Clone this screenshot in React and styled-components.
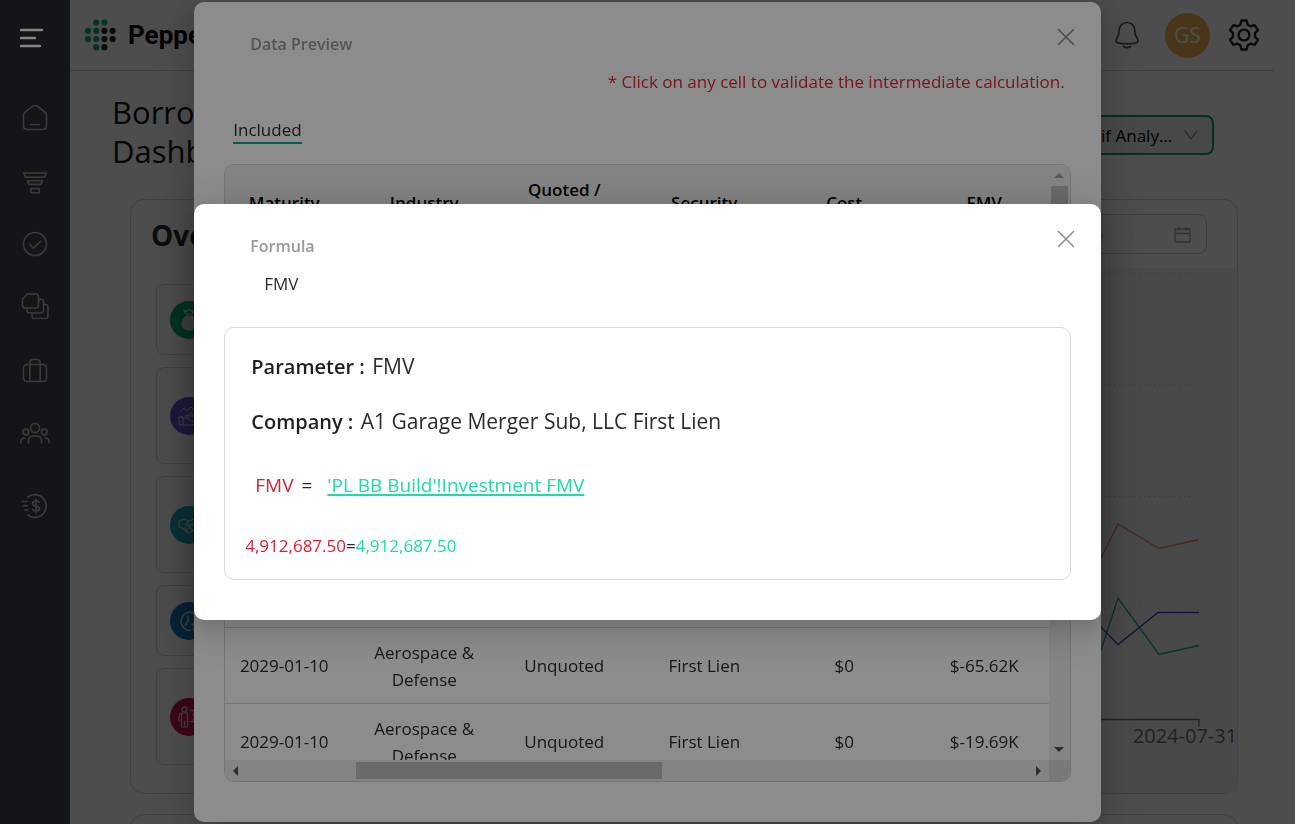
import React, { useLayoutEffect, useRef } from "react";
import styled, { createGlobalStyle } from "styled-components";

const GlobalStyle = createGlobalStyle`
  *, *::before, *::after { box-sizing: border-box; }
  html, body { height: 100%; }
  body {
    margin: 0;
    overflow: hidden;
    background: #fff;
    color: #2b2b2b;
    font-family: "Open Sans", "Noto Sans", sans-serif;
    font-size: 17px;
    font-weight: 400;
    line-height: 27px;
  }
  button, input, select { font: inherit; color: inherit; }
  button { padding: 0; border: 0; background: none; cursor: pointer; }
  h1, h2, h3, p { margin: 0; }
  svg { display: block; }
`;

/* ---------- page shell ---------- */

const Shell = styled.div`
  display: flex;
  height: 100vh;
`;

const Sidebar = styled.nav`
  position: relative;
  z-index: 15;
  flex: none;
  width: 70px;
  height: 100vh;
  padding-top: 26px;
  background: #20282d;
  display: flex;
  flex-direction: column;
  align-items: center;
`;

const MenuButton = styled.button`
  width: 32px;
  height: 24px;
  margin-bottom: 52px;
  margin-right: 6px;
  color: #f4f4f4;
`;

const NavItem = styled.a`
  display: grid;
  place-items: center;
  width: 34px;
  height: 32px;
  margin-bottom: ${(p) => p.$gap || 31}px;
  color: #6c6c6c;
`;

const Page = styled.div`
  flex: 1;
  min-width: 0;
  height: 100vh;
  overflow: hidden;
`;

const Header = styled.header`
  display: flex;
  align-items: center;
  height: 71px;
  margin-right: 21px;
  padding: 0 14px;
  border-bottom: 1px solid #d0d0d0;
`;

const Brand = styled.a`
  display: flex;
  align-items: center;
  gap: 12px;
  margin-right: auto;
  color: #000;
  font: 700 26px/32px Roboto, sans-serif;
  text-decoration: none;
`;

const HeaderActions = styled.div`
  display: flex;
  align-items: center;
  gap: 18px;
`;

const IconButton = styled.button`
  color: ${(p) => p.$tone || "#50565e"};
`;

const BellButton = styled(IconButton)`
  margin-right: 7px;
`;

const Avatar = styled.span`
  display: grid;
  place-items: center;
  width: 45px;
  height: 45px;
  border-radius: 50%;
  background: #f4b350;
  color: #fff;
  font-size: 21px;
`;

const Content = styled.main`
  padding: 22px 57px 0 60px;
`;

const TitleRow = styled.div`
  display: flex;
  align-items: flex-start;
  justify-content: space-between;
  margin-left: -18px;
  padding-right: 24px;
  height: 106px;
`;

const PageTitle = styled.h1`
  max-width: 300px;
  font-size: 31px;
  font-weight: 400;
  line-height: 39px;
  color: #141414;
`;

const SelectBox = styled.label`
  display: flex;
  align-items: center;
  width: 180px;
  height: 40px;
  margin-top: 22px;
  padding: 0 14px 0 19px;
  border: 2px solid #0f9a83;
  border-radius: 8px;
  background: #f0f0f0;
  color: #999;
`;

const SelectField = styled.select`
  flex: 1;
  min-width: 0;
  appearance: none;
  border: 0;
  outline: 0;
  background: none;
  color: #000;
`;

const Panel = styled.section`
  display: flex;
  justify-content: space-between;
  min-height: 595px;
  margin-bottom: 20px;
  border: 1px solid #d5d5d5;
  border-radius: 14px;
`;

const Metrics = styled.div`
  width: 480px;
  padding: 16px 25px 0;
`;

const PanelTitle = styled.h2`
  height: 68px;
  margin-left: -5px;
  font-size: 28px;
  font-weight: 700;
  line-height: 38px;
`;

const MetricCard = styled.article`
  display: flex;
  align-items: center;
  gap: 14px;
  height: ${(p) => (p.$tall ? 97 : 71)}px;
  margin-bottom: 12px;
  padding: 0 13px;
  border: 1px solid #d5d5d5;
  border-radius: 8px;
`;

const MetricBadge = styled.span`
  display: grid;
  place-items: center;
  width: 38px;
  height: 38px;
  border-radius: 50%;
  background: ${(p) => p.$color};
  color: #d8d8d8;
`;

const Trend = styled.div`
  flex: 1;
  min-width: 0;
  display: flex;
  flex-direction: column;
  align-items: flex-end;
`;

const DateBox = styled.label`
  display: flex;
  align-items: center;
  width: 210px;
  height: 40px;
  margin: 14px 30px 14px 0;
  padding: 0 15px 0 34px;
  border: 1px solid #cfcfcf;
  border-radius: 8px;
  color: #a8a8a8;
`;

const DateInput = styled.input`
  flex: 1;
  min-width: 0;
  padding: 0;
  border: 0;
  outline: 0;
  background: none;
  &::placeholder { color: #bfbfbf; opacity: 1; }
`;

const ChartArea = styled.div`
  width: 100%;
  background: #f4f4f4;
`;

/* ---------- modals ---------- */

const Mask = styled.div`
  position: fixed;
  inset: 0;
  z-index: ${(p) => p.$level};
  display: flex;
  align-items: center;
  justify-content: center;
  background: rgba(0, 0, 0, 0.45);
`;

const Dialog = styled.section`
  display: flex;
  flex-direction: column;
  width: 70%;
  padding: 0 30px 40px;
  border-radius: 10px;
  background: #fff;
  box-shadow: 0 6px 16px rgba(0, 0, 0, 0.08), 0 9px 28px 8px rgba(0, 0, 0, 0.05),
    0 6px 48px 8px rgba(0, 0, 0, 0.12);
`;

const DialogHead = styled.header`
  display: flex;
  align-items: flex-start;
  justify-content: space-between;
  height: 66px;
  padding: 23px 0 0 26px;
`;

const DialogTitle = styled.h2`
  font-size: 16px;
  font-weight: 600;
  line-height: 38px;
  color: #999;
`;

const CloseButton = styled.button`
  width: 24px;
  height: 24px;
  margin-right: -7px;
  color: #8c8c8c;
  display: grid;
  place-items: center;
`;

const Note = styled.p`
  padding-right: 6px;
  text-align: right;
  color: #dc2837;
`;

const Tabs = styled.div`
  display: flex;
  padding: 23px 9px 20px;
`;

const Tab = styled.button`
  height: 26px;
  border-bottom: 2px solid #0fa88f;
  line-height: 24px;
`;

const TableFrame = styled.div`
  display: grid;
  grid-template-columns: minmax(0, 1fr) 21px;
  grid-template-rows: auto 21px;
  border: 1px solid #d5d5d5;
  border-radius: 10px;
  overflow: hidden;
`;

const TableViewport = styled.div`
  max-height: calc(100vh - 229px);
  overflow: auto;
  scrollbar-width: none;
`;

const Table = styled.table`
  width: 840px;
  table-layout: fixed;
  border-collapse: separate;
  border-spacing: 0;
  text-align: center;
`;

const HeadCell = styled.th`
  position: sticky;
  top: 0;
  height: 83px;
  padding: 0 16px 7px;
  border-bottom: 1px solid #d5d5d5;
  background: #f0f0f0;
  color: #000;
  font-weight: 600;
`;

const Cell = styled.td`
  height: 76px;
  padding: 0 12px;
  border-bottom: 1px solid #d5d5d5;
`;

const ScrollTrack = styled.div`
  display: flex;
  flex-direction: ${(p) => (p.$vertical ? "column" : "row")};
  align-items: center;
  justify-content: space-between;
  background: #f0f0f0;
`;

const ScrollLane = styled.div`
  flex: 1;
  align-self: stretch;
  display: flex;
  padding: ${(p) => (p.$vertical ? "0 2px" : "2px 0")};
  flex-direction: ${(p) => (p.$vertical ? "column" : "row")};
`;

const ScrollSpace = styled.div`
  flex: ${(p) => p.$share};
`;

const ScrollThumb = styled.div`
  flex: ${(p) => p.$share};
  background: #c1c1c1;
`;

const ScrollArrow = styled.span`
  display: grid;
  place-items: center;
  width: 21px;
  height: 21px;
  color: ${(p) => (p.$dim ? "#a3a3a3" : "#505050")};
`;

const ScrollCorner = styled.div`
  background: #dcdcdc;
`;

const Subject = styled.p`
  height: 57px;
  padding-left: 40px;
`;

const FormulaBox = styled.div`
  height: 253px;
  padding: 24px 20px 0;
  border: 1px solid #d9dadb;
  border-radius: 10px;
`;

const Fact = styled.p`
  margin: 0 6px 27px;
  font-size: 21px;
  line-height: 28px;
`;

const FactName = styled.strong`
  margin-right: 2px;
  font-size: 20px;
  line-height: 20px;
  font-weight: 600;
  color: #1f1f1f;
`;

const Formula = styled.p`
  display: flex;
  margin: 36px 10px 0;
  font-size: 19px;
  line-height: 28px;
`;

const Result = styled.p`
  margin-top: 33px;
`;

const Own = styled.span`
  color: #dc2034;
`;

const Equals = styled.span`
  padding: 0 15px 0 8px;
`;

const Source = styled.a`
  color: #1edbaa;
  text-decoration: underline;
  text-decoration-thickness: 2px;
  text-underline-offset: 2px;
`;

const Value = styled.span`
  color: #1edbaa;
`;

/* ---------- drawings ---------- */

const Stroke = ({ w = 26, h = 26, box = `0 0 ${w} ${h}`, sw = 1.6, children }) => (
  <svg width={w} height={h} viewBox={box} fill="none" stroke="currentColor" strokeWidth={sw}
    strokeLinecap="round" strokeLinejoin="round" aria-hidden="true">
    {children}
  </svg>
);

const CloseIcon = () => (
  <Stroke w={18} h={18} sw={1.5}><path d="M1.5 1.5l15 15M16.5 1.5l-15 15" /></Stroke>
);

const navIcons = [
  {
    name: "Home", gap: 33,
    icon: <Stroke><path d="M1.500 10.500c0-1.600.4-2.400 1.600-3.400l7-5.600c1.800-1.400 4-1.400 5.800 0l7 5.600c1.200 1 1.600 1.800 1.600 3.400v10c0 2.600-1.200 4-4 4h-15c-2.800 0-4-1.400-4-4zM8.500 19.500h9" /></Stroke>,
  },
  {
    name: "Funnel", gap: 29,
    icon: <Stroke><path d="M1.800 3h22.400l-1.400 3.200q-.4 1-1.500 1H4.700q-1.100 0-1.500-1zM5.500 10.800h15l-1 2.600q-.4 1-1.400 1H7.900q-1 0-1.400-1zM9.500 18.600h7q.8 0 .8.800v2.600q0 .8-.8.800h-7q-.8 0-.8-.8v-2.600q0-.8.8-.8z" /></Stroke>,
  },
  {
    name: "Approvals", gap: 30,
    icon: <Stroke><circle cx="13" cy="13" r="11.500" /><path d="M7.800 13.400l3.600 3.800 7.200-6.800" /></Stroke>,
  },
  {
    name: "Documents", gap: 33,
    icon: <Stroke w={28}><path d="M6.500 1h8q3 0 3 3v8q0 3-3 3h-10q-3 0-3-3V6zM17.500 6.500h3q2 0 2 2v8.500q0 3-3 3H8.500q-2.500 0-2.500-2.500V15M22.500 11.500h2q2.500 0 2.500 2.500v8.500q0 3-3 3H13q-2 0-2-2V20" /></Stroke>,
  },
  {
    name: "Portfolio", gap: 31,
    icon: <Stroke><rect x="1.500" y="6.500" width="23" height="17" rx="3.500" /><path d="M7.800 23.500V5q0-3.500 3.500-3.500h3.400q3.500 0 3.500 3.500v18.500" /></Stroke>,
  },
  {
    name: "Investors", gap: 40,
    icon: <Stroke w={30} h={26}><circle cx="15" cy="7" r="4.500" /><circle cx="5.800" cy="11" r="2.900" /><circle cx="24.200" cy="11" r="2.900" /><path d="M8.500 22v-2q0-5 5-5h3q5 0 5 5v2M1 22v-1.500q0-3.500 4-3.500M29 22v-1.500q0-3.500-4-3.500" /></Stroke>,
  },
  {
    name: "Cash flow", gap: 0,
    icon: <Stroke w={28}><path d="M6.800 4A11.400 11.400 0 1 1 6.800 22M1 8.500h5M2.500 12.800h4M3.800 17h3M18.200 9.400q-.8-1.400-3.200-1.400-3.400 0-3.400 2.400 0 2.100 3.400 2.600t3.400 2.700q0 2.300-3.400 2.300-2.600 0-3.500-1.600M15 6v14" /></Stroke>,
  },
];

const LogoDots = () => {
  const dots = [[1, 0], [2, 0], [0, 1], [1, 1], [2, 1], [3, 1], [0, 2], [1, 2], [2, 2], [3, 2], [1, 3], [2, 3]];
  return (
    <svg width="32" height="32" viewBox="0 0 32 32" aria-hidden="true">
      {dots.map(([x, y]) => (
        <circle key={`${x}-${y}`} cx={4 + x * 8.2} cy={3.6 + y * 8.2} r="3.1"
          fill={x < 2 || y === 0 ? "#12a58c" : "#262626"} />
      ))}
    </svg>
  );
};

const BellIcon = () => (
  <Stroke w={26} h={28} sw={1.7}>
    <path d="M13 1.500C8.200 1.500 5.200 5 5.200 9.400c0 4-.6 5.300-2.200 7.600-2 3.200-.8 5 2.600 5.300q7.400.8 14.800 0c3.400-.3 4.600-2.100 2.600-5.300-1.600-2.300-2.200-3.600-2.200-7.600 0-4.400-3-7.900-7.800-7.900zM9.500 25.500q3.500 2.200 7 0" />
  </Stroke>
);

const GearIcon = () => (
  <Stroke w={32} h={32} sw={2.4}>
    <circle cx="16" cy="16" r="5.400" />
    <path d="M13.400 1.500h5.200l1 4.200 2.800 1.600 4.200-1.200 3.400 5-3 3.100v3.600l3 3.100-3.400 5-4.200-1.200-2.800 1.600-1 4.200h-5.200l-1-4.200-2.800-1.600-4.200 1.200-3.400-5 3-3.100v-3.600l-3-3.100 3.400-5 4.200 1.200 2.800-1.600z" />
  </Stroke>
);

const metricCards = [
  { name: "Total BB", color: "#00a868", icon: <svg width="22" height="24" viewBox="0 0 22 24" fill="currentColor" aria-hidden="true"><path d="M8 7.500h6c3 2.500 4.500 5.500 4.500 8.500 0 4-3 6.500-7.500 6.500S3.500 20 3.500 16c0-3 1.500-6 4.500-8.500z" /><path d="M8 6L6 2.500 9 3l2-2 2 2 3-.5L14 6z" fill="none" stroke="currentColor" strokeWidth="1.2" /></svg> },
  { name: "Leverage BB", color: "#6a4fc8", tall: true, icon: <Stroke w={24} h={24} sw={1}><path d="M3 8l4-4 3 3 4-4 4 4M2 13h4v8H3zM6 14h4l4 3h6l-4 4H6M9 13v-2h2v2M13 13V9h2v4M17 13v-3h2v3" /></Stroke> },
  { name: "Subscription BB", color: "#1ca4b4", tall: true, icon: <Stroke w={24} h={24} sw={1.3}><path d="M2 8l5-2 5 2 5-2 5 2M2 8v6l3 1 6 5 3-1 5-4 3-1V8M12 8l-3 4 3 1 3-2 5 4M8 15l3 3M11 13l4 4" /></Stroke> },
  { name: "Availability", color: "#1677bd", icon: <Stroke w={24} h={24} sw={1.6}><path d="M20 6a9.200 9.200 0 1 0-7 15.500M11 7v5l-2.500 4M21 9l-6 7h5M16 20l3 2" /></Stroke> },
  { name: "Obligors", color: "#c41c48", tall: true, icon: <Stroke w={26} h={24} sw={1.2}><circle cx="8.500" cy="4.500" r="2.500" /><path d="M5.500 8h6v14h-3v-6 6h-3zM5.500 8q-2.500 1-2.500 6v2M14 5l3 1 2-3 2 3 3-1M14 17l3-1 2 3 2-3 3 1M21 8.500q-4-1-4 1t3 1.500-1 3.500h-2" /></Stroke> },
];

const TrendChart = () => (
  <svg width="100%" height="525" viewBox="0 0 540 525" preserveAspectRatio="xMaxYMin meet" fill="none" role="img" aria-label="Trend">
    {[6, 117, 228.5, 340].map((y) => (
      <line key={y} x1="17" x2="498" y1={y} y2={y} stroke="#c8c8c8" strokeWidth="1.2" strokeDasharray="1.5 3.5" />
    ))}
    <polyline stroke="#ee8062" strokeWidth="1.3" points="300,360 404,290 421,256 462,280.5 502,271.5" />
    <polyline stroke="#14a8a0" strokeWidth="1.3" points="380,400 404,382 421,330 462,386.5 502,377.5" />
    <polyline stroke="#4a3fae" strokeWidth="1.3" points="380,340 404,359 421,376.5 461,344.5 502,344.5" />
    <path d="M17 451.500h485v7" stroke="#6e7079" strokeWidth="1.3" />
    <text x="488" y="475" textAnchor="middle" fill="#6e7079" fontSize="20" fontWeight="400"
      fontFamily="Open Sans, Noto Sans, sans-serif">2024-07-31</text>
  </svg>
);

/* ---------- data ---------- */

const columns = ["Maturity", "Industry", "Quoted / Unquoted", "Security", "Cost", "FMV"];

const investments = [
  "$4.91M", "$2.04M", "$1.12M", "$3.75M", "$96.10K", "$-65.62K", "$-19.69K",
].map((fmv) => ["2029-01-10", "Aerospace & Defense", "Unquoted", "First Lien", "$0", fmv]);

const INITIAL_SCROLL = 11;

function PreviewTable() {
  const viewport = useRef(null);
  useLayoutEffect(() => {
    viewport.current.scrollLeft = INITIAL_SCROLL;
  }, []);
  return (
    <TableFrame>
      <TableViewport ref={viewport}>
        <Table>
          <thead>
            <tr>{columns.map((c) => <HeadCell key={c} scope="col">{c}</HeadCell>)}</tr>
          </thead>
          <tbody>
            {investments.map((row) => (
              <tr key={row[5]}>{row.map((v, i) => <Cell key={columns[i]}>{v}</Cell>)}</tr>
            ))}
          </tbody>
        </Table>
      </TableViewport>
      <ScrollTrack $vertical aria-hidden="true">
        <ScrollArrow $dim><svg width="10" height="5"><path d="M0 5l5-5 5 5z" fill="currentColor" /></svg></ScrollArrow>
        <ScrollLane $vertical><ScrollThumb $share={4} /><ScrollSpace $share={6} /></ScrollLane>
        <ScrollArrow><svg width="10" height="5"><path d="M0 0l5 5 5-5z" fill="currentColor" /></svg></ScrollArrow>
      </ScrollTrack>
      <ScrollTrack aria-hidden="true">
        <ScrollArrow><svg width="5" height="10"><path d="M5 0L0 5l5 5z" fill="currentColor" /></svg></ScrollArrow>
        <ScrollLane><ScrollSpace $share={110} /><ScrollThumb $share={307} /><ScrollSpace $share={366} /></ScrollLane>
        <ScrollArrow><svg width="5" height="10"><path d="M0 0l5 5-5 5z" fill="currentColor" /></svg></ScrollArrow>
      </ScrollTrack>
      <ScrollCorner />
    </TableFrame>
  );
}

export default function App() {
  return (
    <>
      <GlobalStyle />
      <Shell>
        <Sidebar aria-label="Main">
          <MenuButton aria-label="Menu">
            <Stroke w={32} h={24} sw={2.4}><path d="M5 4h21M5 12h14M5 20h19" /></Stroke>
          </MenuButton>
          {navIcons.map((n) => (
            <NavItem key={n.name} href="#" aria-label={n.name} $gap={n.gap}>{n.icon}</NavItem>
          ))}
        </Sidebar>

        <Page>
          <Header>
            <Brand href="#"><LogoDots />Pepper</Brand>
            <HeaderActions>
              <BellButton aria-label="Notifications"><BellIcon /></BellButton>
              <Avatar>GS</Avatar>
              <IconButton aria-label="Settings" $tone="#262626"><GearIcon /></IconButton>
            </HeaderActions>
          </Header>

          <Content>
            <TitleRow>
              <PageTitle>Borrowing Base Dashboard</PageTitle>
              <SelectBox>
                <SelectField aria-label="Analysis" defaultValue="whatif">
                  <option value="whatif">What if Analy...</option>
                </SelectField>
                <Stroke w={14} h={10} sw={1.3}><path d="M1 1l6 8 6-8" /></Stroke>
              </SelectBox>
            </TitleRow>

            <Panel>
              <Metrics>
                <PanelTitle>Overview</PanelTitle>
                {metricCards.map((m) => (
                  <MetricCard key={m.name} $tall={m.tall}>
                    <MetricBadge $color={m.color}>{m.icon}</MetricBadge>
                    {m.name}
                  </MetricCard>
                ))}
              </Metrics>
              <Trend>
                <DateBox>
                  <DateInput aria-label="Report date" placeholder="End Date" />
                  <Stroke w={17} h={17} sw={1.3}><path d="M1 3h15v13H1zM1 7.500h15M5 1v3.500M12 1v3.500" /></Stroke>
                </DateBox>
                <ChartArea><TrendChart /></ChartArea>
              </Trend>
            </Panel>
            <Panel />
          </Content>
        </Page>
      </Shell>

      <Mask $level={10}>
        <Dialog role="dialog" aria-label="Data Preview">
          <DialogHead>
            <DialogTitle>Data Preview</DialogTitle>
            <CloseButton aria-label="Close data preview"><CloseIcon /></CloseButton>
          </DialogHead>
          <Note>* Click on any cell to validate the intermediate calculation.</Note>
          <Tabs role="tablist">
            <Tab role="tab" aria-selected="true">Included</Tab>
          </Tabs>
          <PreviewTable />
        </Dialog>
      </Mask>

      <Mask $level={20}>
        <Dialog role="dialog" aria-label="Formula">
          <DialogHead>
            <DialogTitle>Formula</DialogTitle>
            <CloseButton aria-label="Close formula"><CloseIcon /></CloseButton>
          </DialogHead>
          <Subject>FMV</Subject>
          <FormulaBox>
            <Fact><FactName>Parameter :</FactName> FMV</Fact>
            <Fact><FactName>Company :</FactName> A1 Garage Merger Sub, LLC First Lien</Fact>
            <Formula>
              <Own>FMV</Own>
              <Equals>=</Equals>
              <Source href="#">'PL BB Build'!Investment FMV</Source>
            </Formula>
            <Result><Own>4,912,687.50</Own>=<Value>4,912,687.50</Value></Result>
          </FormulaBox>
        </Dialog>
      </Mask>
    </>
  );
}
